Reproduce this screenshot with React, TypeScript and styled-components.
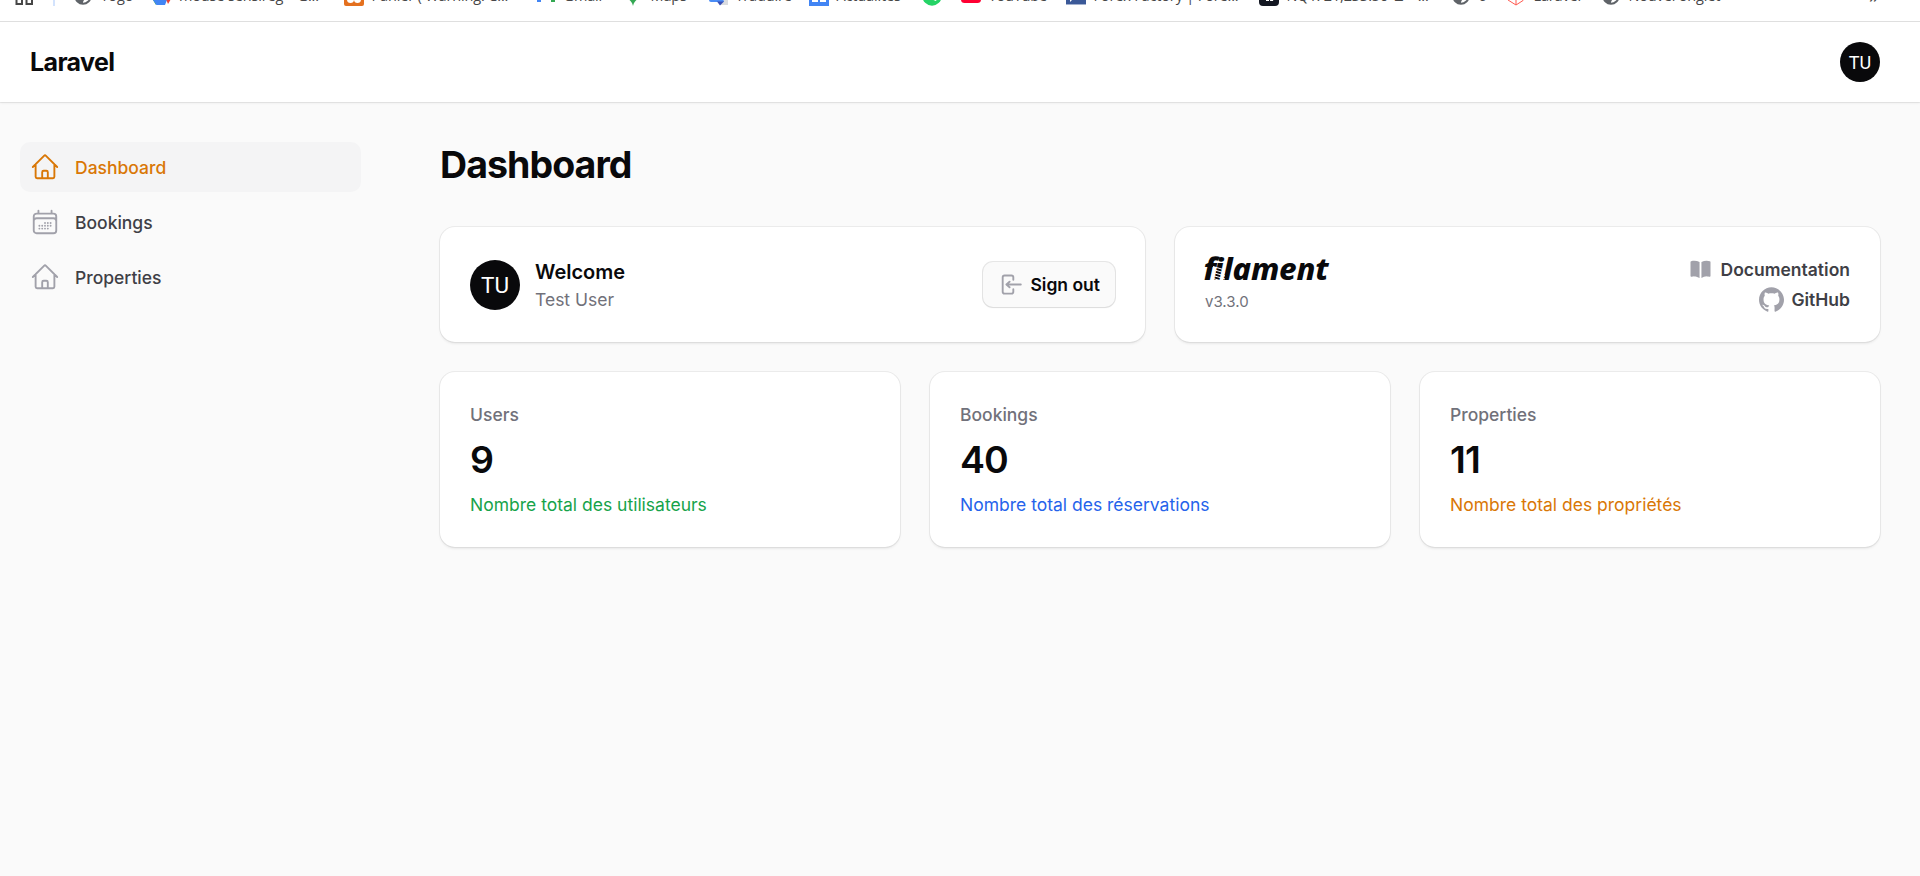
import React from "react";
import styled, { createGlobalStyle } from "styled-components";

const Global = createGlobalStyle`
  *, *::before, *::after { box-sizing: border-box; }
  html { font-size: 20px; }
  body { margin: 0; background: #fafafa; font-family: Inter, "Liberation Sans", sans-serif; color: #09090b; overflow: hidden; }
  h1, h2, p { margin: 0; }
  svg { display: block; flex: none; }
`;

const Browser = styled.div`
  position: relative;
  z-index: 1;
  height: 22px;
  background: #fff;
  border-bottom: 1px solid #dfdfdf;
  overflow: hidden;
`;

const Bookmarks = styled.div`
  display: flex;
  align-items: center;
  height: 20px;
  margin-top: -14px;
  padding-left: 13px;
`;

const Bookmark = styled.div<{ $w: number }>`
  display: flex;
  align-items: center;
  flex: none;
  gap: 7.5px;
  width: ${(p) => p.$w}px;
`;

const BookmarkLabel = styled.span`
  font: 14.5px/20px "Open Sans", "Noto Sans", sans-serif;
  letter-spacing: -0.15px;
  color: #474747;
  white-space: nowrap;
`;

const Divider = styled.i`
  width: 2px;
  height: 20px;
  margin: 0 18.5px 0 19.5px;
  background: #d3e3fd;
`;

const Overflow = styled.span`
  margin-left: auto;
  margin-right: 41px;
  font: 20px/20px "Open Sans", sans-serif;
  color: #474747;
`;

const Topbar = styled.header`
  display: flex;
  align-items: center;
  justify-content: space-between;
  height: 80px;
  padding: 0 40px 0 30px;
  background: #fff;
  box-shadow: 0 0 0 1px rgba(9, 9, 11, 0.06), 0 1.25px 2.5px rgba(0, 0, 0, 0.07);
`;

const Brand = styled.div`
  font-size: 25px;
  line-height: 25px;
  padding-top: 1px;
  font-weight: 700;
  letter-spacing: -0.025em;
`;

const Avatar = styled.div<{ $size: number }>`
  display: flex;
  align-items: center;
  justify-content: center;
  width: ${(p) => p.$size}px;
  height: ${(p) => p.$size}px;
  border-radius: 50%;
  background: #09090b;
  color: #fff;
  font-family: Roboto, sans-serif;
  font-size: ${(p) => p.$size * 0.45}px;
`;

const Body = styled.div`
  display: flex;
`;

const Sidebar = styled.nav`
  display: flex;
  flex-direction: column;
  gap: 5px;
  width: 400px;
  padding: 40px 39px 0 20px;
`;

const NavItem = styled.a<{ $active?: boolean }>`
  display: flex;
  align-items: center;
  gap: 15px;
  height: 50px;
  padding: 0 10px;
  border-radius: 10px;
  background: ${(p) => (p.$active ? "#f4f4f5" : "transparent")};
  color: ${(p) => (p.$active ? "#d97706" : "#3f3f46")};
  font-size: 17.5px;
  font-weight: 500;

  svg { color: ${(p) => (p.$active ? "#d97706" : "#a1a1aa")}; }
`;

const Main = styled.main`
  flex: 1;
  padding: 40px;
`;

const Title = styled.h1`
  margin-bottom: 40px;
  font-size: 37.5px;
  line-height: 45px;
  font-weight: 700;
  letter-spacing: -0.025em;
`;

const Grid = styled.div<{ $cols: number }>`
  display: grid;
  grid-template-columns: repeat(${(p) => p.$cols}, 1fr);
  gap: 30px;
  margin-bottom: 30px;
`;

const Card = styled.section`
  padding: 30px;
  border-radius: 15px;
  background: #fff;
  box-shadow: 0 0 0 1px rgba(9, 9, 11, 0.06), 0 1.25px 2.5px rgba(0, 0, 0, 0.07);
`;

const RowCard = styled(Card)`
  display: flex;
  align-items: center;
  height: 115px;
`;

const Account = styled.div`
  flex: 1;
  margin-left: 15px;
`;

const Welcome = styled.h2`
  font-size: 20px;
  line-height: 30px;
  font-weight: 600;
`;

const Muted = styled.p<{ $medium?: boolean }>`
  font-size: 17.5px;
  line-height: 25px;
  font-weight: ${(p) => (p.$medium ? 500 : 400)};
  color: #71717a;
`;

const SignOut = styled.button`
  display: flex;
  align-items: center;
  gap: 7.5px;
  height: 45px;
  padding: 0 15px;
  border: 0;
  border-radius: 10px;
  background: #fafafa;
  box-shadow: 0 0 0 1px rgba(9, 9, 11, 0.1), 0 1px 2px rgba(0, 0, 0, 0.05);
  color: #09090b;
  font: 600 17.5px/25px Inter, sans-serif;

  svg { color: #a1a1aa; }
`;

const Product = styled.div`
  flex: 1;
`;

const Wordmark = styled.div`
  position: relative;
  display: flex;
  width: 125px;
  height: 25px;
  margin-left: -4px;
  font: italic 800 31px/23px "Noto Sans", sans-serif;
  letter-spacing: -0.2px;
  white-space: nowrap;
`;

const Upright = styled.span`
  font-style: normal;
  transform: skewX(-12deg);
  transform-origin: 0 100%;
  margin-right: 0.5px;
`;

const Coil = styled.svg`
  position: absolute;
  left: 12px;
  top: 6px;
`;

const Version = styled.p`
  margin-top: 10px;
  font-size: 15px;
  line-height: 20px;
  color: #71717a;
`;

const Links = styled.div`
  display: flex;
  flex-direction: column;
  align-items: flex-end;
  gap: 5px;
`;

const LinkItem = styled.a`
  display: flex;
  align-items: center;
  gap: 7.5px;
  height: 25px;
  color: #3f3f46;
  font-size: 17.5px;
  font-weight: 600;

  svg { color: #a1a1aa; }
`;

const StatValue = styled.div`
  margin: 10px 0;
  font-size: 37.5px;
  line-height: 45px;
  font-weight: 600;
  letter-spacing: -0.025em;
`;

const StatNote = styled.p<{ $color: string }>`
  font-size: 17.5px;
  line-height: 25px;
  color: ${(p) => p.$color};
`;

const Outline = ({ size, d }: { size: number; d: string }) => (
  <svg width={size} height={size} viewBox="0 0 24 24" fill="none" stroke="currentColor" strokeWidth="1.5" strokeLinecap="round" strokeLinejoin="round">
    <path d={d} />
  </svg>
);

const HOME = "m2.25 12 8.954-8.955c.44-.439 1.152-.439 1.591 0L21.75 12M4.5 9.75v10.125c0 .621.504 1.125 1.125 1.125H9.75v-4.875c0-.621.504-1.125 1.125-1.125h2.25c.621 0 1.125.504 1.125 1.125V21h4.125c.621 0 1.125-.504 1.125-1.125V9.75M8.25 21h8.25";
const CALENDAR = "M6.75 3v2.25M17.25 3v2.25M3 18.75V7.5a2.25 2.25 0 0 1 2.25-2.25h13.5A2.25 2.25 0 0 1 21 7.5v11.25m-18 0A2.25 2.25 0 0 0 5.25 21h13.5A2.25 2.25 0 0 0 21 18.75m-18 0v-7.5A2.25 2.25 0 0 1 5.25 9h13.5A2.25 2.25 0 0 1 21 11.25v7.5m-9-6h.008v.008H12v-.008ZM12 15h.008v.008H12V15Zm0 2.25h.008v.008H12v-.008ZM9.75 15h.008v.008H9.75V15Zm0 2.25h.008v.008H9.75v-.008ZM7.5 15h.008v.008H7.5V15Zm0 2.25h.008v.008H7.5v-.008Zm6.75-4.5h.008v.008h-.008v-.008Zm0 2.25h.008v.008h-.008V15Zm0 2.25h.008v.008h-.008v-.008Zm2.25-4.5h.008v.008H16.5v-.008Zm0 2.25h.008v.008H16.5V15Z";
const GITHUB = "M12 .297c-6.63 0-12 5.373-12 12 0 5.303 3.438 9.8 8.205 11.385.6.113.82-.258.82-.577 0-.285-.01-1.04-.015-2.04-3.338.724-4.042-1.61-4.042-1.61C4.422 18.07 3.633 17.7 3.633 17.7c-1.087-.744.084-.729.084-.729 1.205.084 1.838 1.236 1.838 1.236 1.07 1.835 2.809 1.305 3.495.998.108-.776.417-1.305.76-1.605-2.665-.3-5.466-1.332-5.466-5.93 0-1.31.465-2.38 1.235-3.22-.135-.303-.54-1.523.105-3.176 0 0 1.005-.322 3.3 1.23.96-.267 1.98-.399 3-.405 1.02.006 2.04.138 3 .405 2.28-1.552 3.285-1.23 3.285-1.23.645 1.653.24 2.873.12 3.176.765.84 1.23 1.91 1.23 3.22 0 4.61-2.805 5.625-5.475 5.92.42.36.81 1.096.81 2.22 0 1.606-.015 2.896-.015 3.286 0 .315.21.69.825.57C20.565 22.092 24 17.592 24 12.297c0-6.627-5.373-12-12-12";

const Icon20 = ({ children }: { children: React.ReactNode }) => (
  <svg width="20" height="20" viewBox="0 0 20 20">{children}</svg>
);

const AppsIcon = () => (
  <Icon20>
    <g fill="none" stroke="#474747" strokeWidth="2">
      <rect x="3.500" y="1" width="5.5" height="6" />
      <rect x="13.500" y="1" width="5.5" height="6" />
      <rect x="3.500" y="11.5" width="5.5" height="6.5" />
      <rect x="13.500" y="11.5" width="5.5" height="6.5" />
    </g>
  </Icon20>
);

const GlobeIcon = () => (
  <Icon20>
    <circle cx="10" cy="10.2" r="7.6" fill="#fff" stroke="#5f6368" strokeWidth="2" />
    <path d="M3 9h5l3 3v2l-1 2v2a8 8 0 0 1-7-9zM10 3l1 3 4 1-1 4 3 3 1-6z" fill="#5f6368" />
  </Icon20>
);

const DriveIcon = () => (
  <Icon20>
    <path d="M7 2h6l5 10h-6z" fill="#fbbc04" />
    <path d="M7 2 1 14l3 5 6-11z" fill="#34a853" />
    <path d="M1 14h14l-2 5H4.500z" fill="#4285f4" />
    <path d="M14 13h5l-3 5z" fill="#ea4335" />
  </Icon20>
);

const XamppIcon = () => (
  <Icon20>
    <rect width="20" height="20" rx="2" fill="#e4701e" />
    <path d="M3 13.500a3.500 3.500 0 0 0 7 0 3.500 3.500 0 0 0 7 0V8H3z" fill="#fff" />
  </Icon20>
);

const GmailIcon = () => (
  <Icon20>
    <path d="M1 4v12h4V8z" fill="#4285f4" />
    <path d="M19 4v12h-4V8z" fill="#34a853" />
    <path d="m1 4 9 7 9-7v3l-9 7-9-7z" fill="#ea4335" />
  </Icon20>
);

const PinIcon = () => (
  <Icon20>
    <circle cx="10" cy="7" r="6" fill="#4285f4" />
    <path d="M5 11h10c-1 4-4 4-5 9-1-5-4-5-5-9z" fill="#34a853" />
  </Icon20>
);

const TranslateIcon = () => (
  <Icon20>
    <path d="M8 5h12v14H12z" fill="#dadce0" />
    <path d="M1 1h11l4 15H3a2 2 0 0 1-2-2z" fill="#4a8cf5" />
    <path d="M9 15.500h7l-4 4z" fill="#3b50b5" />
  </Icon20>
);

const NewsIcon = () => (
  <Icon20>
    <rect width="20" height="20" fill="#4285f4" />
    <path d="M3 8h6v8H3zM11 8h6v2h-6zM11 11h6v1.500h-6zM11 14h6v2h-6z" fill="#fff" />
  </Icon20>
);

const WhatsappIcon = () => (
  <Icon20>
    <circle cx="10" cy="10" r="9.700" fill="#25d366" />
    <path d="M6 6c1 5 4 8 8 9l1-2-3-1-1 1-3-4 1-1z" fill="#fff" />
  </Icon20>
);

const YoutubeIcon = () => (
  <Icon20>
    <rect y="3" width="20" height="14" rx="3.500" fill="#ff0033" />
    <path d="M8 7v6l5-3z" fill="#fff" />
  </Icon20>
);

const ForexIcon = () => (
  <Icon20>
    <rect width="20" height="18" fill="#3b5998" />
    <rect y="18" width="20" height="1" fill="#a3b1cf" />
    <path d="M4 16V4h10v3H7v3h5v3H7z" fill="#fff" />
  </Icon20>
);

const ChartIcon = () => (
  <Icon20>
    <rect width="20" height="20" rx="4" fill="#131722" />
    <path d="M4 7h6v8H7v-5H4zM12 7h4l-2 8h-3z" fill="#fff" />
  </Icon20>
);

const LaravelIcon = () => (
  <Icon20>
    <path d="M2 4v10l8 5 7-4.500V8l-7 4-8-5M10 12v7M6 10l4-2 7 4M10 8v4" fill="none" stroke="#ff5a50" strokeWidth="1" />
  </Icon20>
);

const BOOKMARKS = [
  { icon: <GlobeIcon />, label: "Togo", w: 78.5 },
  { icon: <DriveIcon />, label: "mouse sensireg – G...", w: 192.5 },
  { icon: <XamppIcon />, label: "Panier ( Warning! C...", w: 192 },
  { icon: <GmailIcon />, label: "Gmail", w: 87 },
  { icon: <PinIcon />, label: "Maps", w: 85 },
  { icon: <TranslateIcon />, label: "Traduire", w: 101 },
  { icon: <NewsIcon />, label: "Actualités", w: 112.5 },
  { icon: <WhatsappIcon />, label: "", w: 39.5 },
  { icon: <YoutubeIcon />, label: "YouTube", w: 105 },
  { icon: <ForexIcon />, label: "Forex Factory | Fore...", w: 193 },
  { icon: <ChartIcon />, label: "NQ1! 21,233.50 ▲ +...", w: 192 },
  { icon: <GlobeIcon />, label: "6", w: 55 },
  { icon: <LaravelIcon />, label: "Laravel", w: 95 },
  { icon: <GlobeIcon />, label: "Nouvel onglet", w: 130 },
];

const STATS = [
  { label: "Users", value: "9", note: "Nombre total des utilisateurs", color: "#16a34a" },
  { label: "Bookings", value: "40", note: "Nombre total des réservations", color: "#2563eb" },
  { label: "Properties", value: "11", note: "Nombre total des propriétés", color: "#d97706" },
];

export default function App() {
  return (
    <>
      <Global />
      <Browser>
        <Bookmarks>
          <AppsIcon />
          <Divider />
          {BOOKMARKS.map((b, i) => (
            <Bookmark key={i} $w={b.w}>
              {b.icon}
              {b.label && <BookmarkLabel>{b.label}</BookmarkLabel>}
            </Bookmark>
          ))}
          <Overflow>»</Overflow>
        </Bookmarks>
      </Browser>
      <Topbar>
        <Brand>Laravel</Brand>
        <Avatar $size={40}>TU</Avatar>
      </Topbar>
      <Body>
        <Sidebar>
          <NavItem $active><Outline size={30} d={HOME} />Dashboard</NavItem>
          <NavItem><Outline size={30} d={CALENDAR} />Bookings</NavItem>
          <NavItem><Outline size={30} d={HOME} />Properties</NavItem>
        </Sidebar>
        <Main>
          <Title>Dashboard</Title>
          <Grid $cols={2}>
            <RowCard>
              <Avatar $size={50}>TU</Avatar>
              <Account>
                <Welcome>Welcome</Welcome>
                <Muted>Test User</Muted>
              </Account>
              <SignOut>
                <svg width="25" height="25" viewBox="0 0 20 20" fill="currentColor">
                  <path fillRule="evenodd" clipRule="evenodd" d="M3 4.25A2.25 2.25 0 0 1 5.25 2h5.5A2.25 2.25 0 0 1 13 4.25v2a.75.75 0 0 1-1.5 0v-2a.75.75 0 0 0-.75-.75h-5.5a.75.75 0 0 0-.75.75v11.5c0 .414.336.75.75.75h5.5a.75.75 0 0 0 .75-.75v-2a.75.75 0 0 1 1.5 0v2A2.25 2.25 0 0 1 10.75 18h-5.5A2.25 2.25 0 0 1 3 15.75V4.25Z" />
                  <path fillRule="evenodd" clipRule="evenodd" d="M19 10a.75.75 0 0 0-.75-.75H8.704l1.048-.943a.75.75 0 1 0-1.004-1.114l-2.5 2.25a.75.75 0 0 0 0 1.114l2.5 2.25a.75.75 0 1 0 1.004-1.114l-1.048-.943h9.546A.75.75 0 0 0 19 10Z" />
                </svg>
                Sign out
              </SignOut>
            </RowCard>
            <RowCard>
              <Product>
                <Wordmark>
                  <Upright>f</Upright>
                  <span>ilament</span>
                  <Coil width="13" height="20" viewBox="0 0 13 20" stroke="#fff" strokeWidth="1">
                    <path d="M0 3.500 12 7M0 6.500 12 10M0 9.500 12 13M0 12.500 12 16M0 15.500 9 18" />
                  </Coil>
                </Wordmark>
                <Version>v3.3.0</Version>
              </Product>
              <Links>
                <LinkItem>
                  <svg width="25" height="25" viewBox="0 0 20 20" fill="currentColor">
                    <path d="M10.75 16.82A7.462 7.462 0 0 1 15 15.5c.71 0 1.396.098 2.046.282A.75.75 0 0 0 18 15.06v-11a.75.75 0 0 0-.546-.721A9.006 9.006 0 0 0 15 3a8.963 8.963 0 0 0-4.25 1.065V16.82ZM9.25 4.065A8.963 8.963 0 0 0 5 3c-.85 0-1.673.118-2.454.339A.75.75 0 0 0 2 4.06v11a.75.75 0 0 0 .954.721A7.506 7.506 0 0 1 5 15.5c1.579 0 3.042.487 4.25 1.32V4.065Z" />
                  </svg>
                  Documentation
                </LinkItem>
                <LinkItem>
                  <svg width="25" height="25" viewBox="0 0 24 24" fill="currentColor"><path d={GITHUB} /></svg>
                  GitHub
                </LinkItem>
              </Links>
            </RowCard>
          </Grid>
          <Grid $cols={3}>
            {STATS.map((s) => (
              <Card key={s.label}>
                <Muted $medium>{s.label}</Muted>
                <StatValue>{s.value}</StatValue>
                <StatNote $color={s.color}>{s.note}</StatNote>
              </Card>
            ))}
          </Grid>
        </Main>
      </Body>
    </>
  );
}
